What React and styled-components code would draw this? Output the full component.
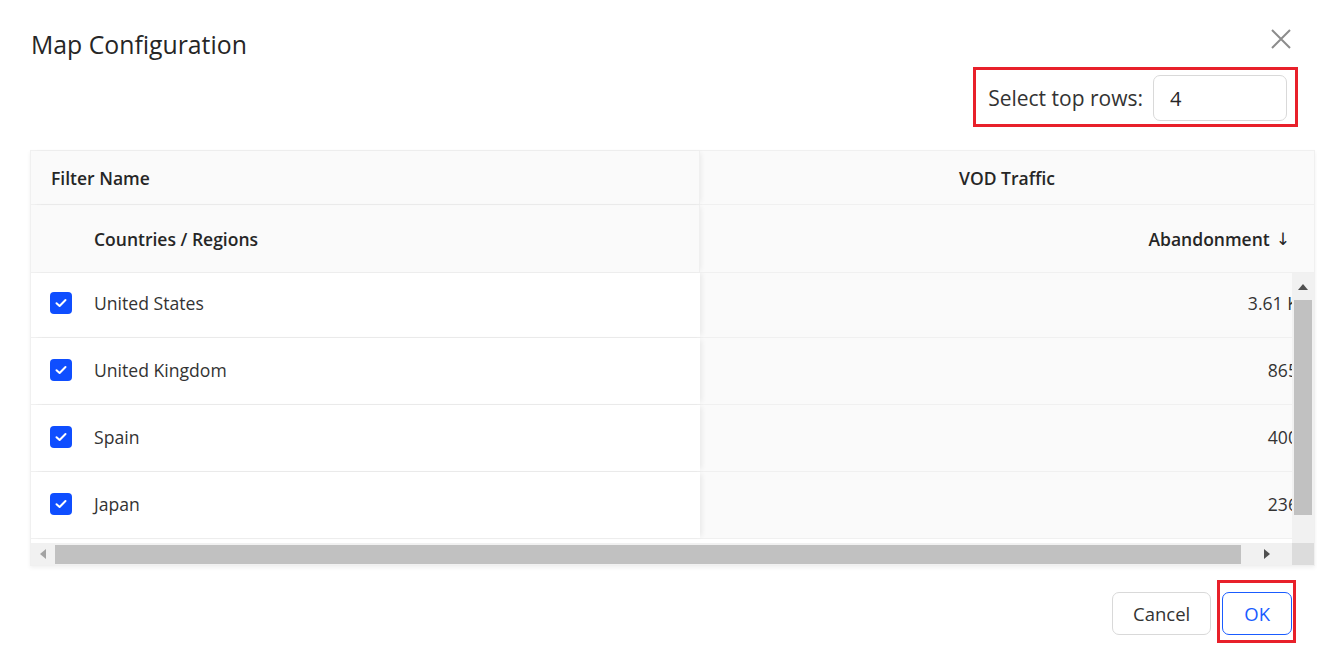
import React from "react";
import styled, { createGlobalStyle } from "styled-components";

const GlobalStyle = createGlobalStyle`
  html, body {
    margin: 0;
    padding: 0;
    background: #ffffff;
    font-family: "Open Sans", "Noto Sans", sans-serif;
    color: #262626;
  }
  * { box-sizing: border-box; }
`;

const Dialog = styled.div`
  width: 1317px;
  height: 657px;
  display: flex;
  flex-direction: column;
  background: #fff;
  overflow: hidden;
`;

const Header = styled.div`
  display: flex;
  justify-content: space-between;
  align-items: flex-start;
  padding: 28px 24px 0 31px;
`;

const Title = styled.h2`
  margin: 0;
  font-size: 24.8px;
  font-weight: 500;
  line-height: 33px;
  color: #262626;
`;

const CloseButton = styled.button`
  border: none;
  background: none;
  padding: 0;
  margin-top: -1px;
  width: 24px;
  height: 24px;
  display: flex;
  align-items: center;
  justify-content: center;
  cursor: pointer;
`;

const Toolbar = styled.div`
  display: flex;
  justify-content: flex-end;
  padding: 6px 19px 0 0;
`;

const Highlight = styled.div`
  border: 3px solid #e8202a;
  display: flex;
  align-items: center;
  padding: ${(p) => p.$pad};
`;

const Label = styled.span`
  font-size: 21px;
  color: #333;
  margin-right: 10px;
  line-height: 28px;
`;

const NumberInput = styled.input`
  width: 134px;
  height: 46px;
  border: 1px solid #d9d9d9;
  border-radius: 7px;
  padding: 0 16px;
  font-family: inherit;
  font-size: 20px;
  color: #262626;
  outline: none;
`;

const Table = styled.div`
  margin: 23px 2px 0 30px;
  border: 1px solid #f0f0f0;
  box-shadow: 0 2px 4px rgba(0, 0, 0, 0.06);
  display: flex;
  flex-direction: column;
`;

const HeadRow = styled.div`
  display: flex;
  height: ${(p) => p.$h}px;
  background: #fafafa;
  border-bottom: 1px solid #f0f0f0;
`;

const FixedHead = styled.div`
  width: 669px;
  flex: none;
  display: flex;
  align-items: center;
  padding-left: ${(p) => p.$indent}px;
  font-size: 17.5px;
  font-weight: 600;
  color: #262626;
  border-right: 1px solid #f0f0f0;
  box-shadow: 3px 0 5px -2px rgba(0, 0, 0, 0.07);
  position: relative;
  z-index: 1;
`;

const HeadCell = styled.div`
  flex: 1;
  display: flex;
  align-items: center;
  justify-content: ${(p) => p.$align};
  padding-right: ${(p) => p.$pr}px;
  font-size: 17.5px;
  font-weight: 600;
  color: #262626;
`;

const SortArrow = styled.span`
  margin-left: 6px;
  font-family: "DejaVu Sans", sans-serif;
  font-weight: 400;
  font-size: 17px;
  color: #262626;
`;

const BodyGrid = styled.div`
  display: grid;
  grid-template-columns: 1fr 22px;
  grid-template-rows: 270px 22px;
`;

const Viewport = styled.div`
  overflow: hidden;
`;

const Rows = styled.div`
  margin-top: -2px;
`;

const Row = styled.div`
  display: flex;
  height: 67px;
  border-bottom: 1px solid #f0f0f0;
  width: 1294px;
`;

const FixedCell = styled.div`
  width: 669px;
  flex: none;
  display: flex;
  align-items: center;
  padding: 0 0 2px 19px;
  background: #fff;
  font-size: 17.6px;
  color: #333;
  box-shadow: 4px 0 5px -2px rgba(0, 0, 0, 0.07);
  position: relative;
  z-index: 1;
`;

const ValueCell = styled.div`
  flex: 1;
  display: flex;
  align-items: center;
  justify-content: flex-end;
  padding: 0 27px 2px 0;
  background: #fafafa;
  font-size: 17.6px;
  color: #333;
`;

const Check = styled.span`
  width: 22px;
  height: 22px;
  border-radius: 4px;
  background: #0f4eff;
  display: inline-flex;
  align-items: center;
  justify-content: center;
  margin-right: 22px;
`;

const VScroll = styled.div`
  background: #f1f1f1;
  display: flex;
  flex-direction: column;
  align-items: center;
  padding: 0 2px;
`;

const HScroll = styled.div`
  background: #f1f1f1;
  display: flex;
  align-items: center;
`;

const ArrowBox = styled.div`
  flex: none;
  width: ${(p) => p.$w}px;
  height: ${(p) => p.$h}px;
  display: flex;
  align-items: center;
  justify-content: center;
`;

const Thumb = styled.div`
  background: #c1c1c1;
  flex: none;
  width: ${(p) => p.$w};
  height: ${(p) => p.$h};
`;

const Corner = styled.div`
  background: #dcdcdc;
`;

const Footer = styled.div`
  display: flex;
  justify-content: flex-end;
  align-items: flex-start;
  padding: 14px 21px 0 0;
`;

const Button = styled.button`
  height: 43px;
  padding: 0 ${(p) => p.$px}px;
  border-radius: 7px;
  font-family: inherit;
  font-size: 18.5px;
  background: #fff;
  border: 1px solid ${(p) => (p.$primary ? "#1a5cff" : "#d9d9d9")};
  color: ${(p) => (p.$primary ? "#1a5cff" : "#333")};
  cursor: pointer;
`;

const CancelButton = styled(Button)`
  margin-top: 12px;
  margin-right: 6px;
`;

const rows = [
  { name: "United States", value: "3.61 K" },
  { name: "United Kingdom", value: "865" },
  { name: "Spain", value: "400" },
  { name: "Japan", value: "236" },
];

const CheckMark = () => (
  <svg width="14" height="14" viewBox="0 0 14 14">
    <path d="M2.5 7.2 L5.6 10 L11.5 4" fill="none" stroke="#fff" strokeWidth="2" strokeLinecap="round" strokeLinejoin="round" />
  </svg>
);

export default function App() {
  return (
    <>
      <GlobalStyle />
      <Dialog>
        <Header>
          <Title>Map Configuration</Title>
          <CloseButton aria-label="Close">
            <svg width="20" height="20" viewBox="0 0 20 20">
              <path d="M1 1 L19 19 M19 1 L1 19" stroke="#8c8c8c" strokeWidth="2" />
            </svg>
          </CloseButton>
        </Header>

        <Toolbar>
          <Highlight $pad="5px 8px 3px 12px">
            <Label>Select top rows:</Label>
            <NumberInput defaultValue="4" />
          </Highlight>
        </Toolbar>

        <Table>
          <HeadRow $h={54}>
            <FixedHead $indent={20}>Filter Name</FixedHead>
            <HeadCell $align="center" $pr={0}>VOD Traffic</HeadCell>
          </HeadRow>
          <HeadRow $h={68}>
            <FixedHead $indent={63}>Countries / Regions</FixedHead>
            <HeadCell $align="flex-end" $pr={24}>
              Abandonment<SortArrow>↓</SortArrow>
            </HeadCell>
          </HeadRow>

          <BodyGrid>
            <Viewport>
              <Rows>
                {rows.map((r) => (
                  <Row key={r.name}>
                    <FixedCell>
                      <Check><CheckMark /></Check>
                      {r.name}
                    </FixedCell>
                    <ValueCell>{r.value}</ValueCell>
                  </Row>
                ))}
              </Rows>
            </Viewport>
            <VScroll>
              <ArrowBox $w={18} $h={27}>
                <svg width="10" height="6" viewBox="0 0 10 6"><path d="M0 6 L5 0 L10 6 Z" fill="#505050" /></svg>
              </ArrowBox>
              <Thumb $w="18px" $h="215px" />
            </VScroll>
            <HScroll>
              <ArrowBox $w={24} $h={22}>
                <svg width="6" height="10" viewBox="0 0 6 10"><path d="M6 0 L0 5 L6 10 Z" fill="#a3a3a3" /></svg>
              </ArrowBox>
              <Thumb $w="1186px" $h="19px" />
              <ArrowBox $w={51} $h={22}>
                <svg width="6" height="10" viewBox="0 0 6 10"><path d="M0 0 L6 5 L0 10 Z" fill="#505050" /></svg>
              </ArrowBox>
            </HScroll>
            <Corner />
          </BodyGrid>
        </Table>

        <Footer>
          <CancelButton $px={20}>Cancel</CancelButton>
          <Highlight $pad="9px 1px 5px 2px">
            <Button $primary $px={21}>OK</Button>
          </Highlight>
        </Footer>
      </Dialog>
    </>
  );
}
